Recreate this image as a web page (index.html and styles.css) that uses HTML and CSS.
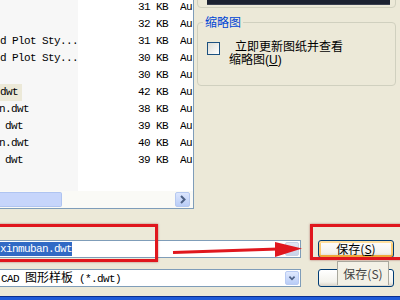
FILE: index.html
```html
<html>
<head>
	<title>save</title>
	<link rel="stylesheet" href="styles.css">
</head>
<body>
	<div class="top">
		<div class="list">
			<div class="rows">
				<div class="row"><span class="name"></span><span class="size">31 KB</span><span></span><span class="type">Au</span></div>
				<div class="row"><span class="name"></span><span class="size">32 KB</span><span></span><span class="type">Au</span></div>
				<div class="row"><span class="name">d Plot Sty...</span><span class="size">31 KB</span><span></span><span class="type">Au</span></div>
				<div class="row"><span class="name">d Plot Sty...</span><span class="size">30 KB</span><span></span><span class="type">Au</span></div>
				<div class="row"><span class="name"></span><span class="size">30 KB</span><span></span><span class="type">Au</span></div>
				<div class="row"><span class="name"><span class="hl">dwt</span></span><span class="size">42 KB</span><span></span><span class="type">Au</span></div>
				<div class="row"><span class="name cut">n.dwt</span><span class="size">38 KB</span><span></span><span class="type">Au</span></div>
				<div class="row"><span class="name pad">dwt</span><span class="size">39 KB</span><span></span><span class="type">Au</span></div>
				<div class="row"><span class="name cut">n.dwt</span><span class="size">40 KB</span><span></span><span class="type">Au</span></div>
				<div class="row"><span class="name pad">dwt</span><span class="size">39 KB</span><span></span><span class="type">Au</span></div>
			</div>
			<div class="hscroll">
				<div class="thumb"></div>
				<div class="arrow"><svg width="13" height="13" viewBox="0 0 13 13"><path d="M5 3 L8.5 6.5 L5 10" fill="none" stroke="#4D6185" stroke-width="2"/></svg></div>
			</div>
		</div>
		<div class="side">
			<div class="preview"><div class="screen"></div></div>
			<fieldset class="thumbs">
				<legend>缩略图</legend>
				<label class="opt"><span class="chk"></span><span class="ltext">立即更新图纸并查看<br>缩略图(<u>U</u>)</span></label>
			</fieldset>
		</div>
	</div>

	<div class="bottom">
		<div class="line">
			<div class="combo">
				<span class="sel">xinmuban.dwt</span>
				<span class="drop faded"><svg width="14" height="14" viewBox="0 0 14 14"><path d="M4 5.5 L7 8.5 L10 5.5" fill="none" stroke="#8FA2C8" stroke-width="2"/></svg></span>
			</div>
			<button class="btn save"><span class="cj">保存(<u>S</u>)</span></button>
		</div>
		<div class="line">
			<div class="combo">
				<span class="ftype">CAD <span class="cj">图形样板</span> (*.dwt)</span>
				<span class="drop"><svg width="14" height="14" viewBox="0 0 14 14"><path d="M4 5.5 L7 8.5 L10 5.5" fill="none" stroke="#4D6185" stroke-width="2"/></svg></span>
			</div>
			<button class="btn"></button>
		</div>
		<div class="taskbar"></div>
	</div>

	<!-- red annotations -->
	<div class="mark m1"></div>
	<div class="mark m2"></div>
	<svg class="arrowline" width="400" height="300" viewBox="0 0 400 300">
		<path d="M173 252.5 L278 249" stroke="#E0171E" stroke-width="3"/>
		<polygon points="275,242 302,248.5 275,257" fill="#E0171E"/>
	</svg>
	<div class="tip"><span class="cj">保存(S)</span></div>
</body>
</html>
```

FILE: styles.css
```css
*{
	box-sizing:border-box;
}
body{
	margin:0;
	width:400px;
	height:300px;
	overflow:hidden;
	position:relative;
	background-color:#ECE9D8;
	font-family:"Liberation Mono","Noto Sans CJK SC",monospace;
	font-size:11px;
	letter-spacing:-0.6px;
	color:#000;
}
.cj{
	font-family:"Noto Sans CJK SC",sans-serif;
	font-size:12px;
	letter-spacing:0;
}

/* file list */
.top{
	display:flex;
	height:209px;
}
.list{
	width:194px;
	flex:none;
	display:flex;
	flex-direction:column;
	background-color:#fff;
	border-right:1px solid #7F9DB9;
	border-bottom:1px solid #7F9DB9;
}
.rows{
	height:191px;
	overflow:hidden;
	background:linear-gradient(to right,#F7F7F7 78px,#fff 78px);
}
.row{
	display:grid;
	grid-template-columns:78px 90px 12px 13px;
	height:17px;
	line-height:17px;
	white-space:nowrap;
}
.row:first-child{
	margin-top:-1px;
}
.name{
	overflow:visible;
}
.name.cut{
	margin-left:-1px;
}
.name.pad{
	padding-left:5px;
}
.hl{
	display:inline-block;
	width:22px;
	background-color:#ECE9D8;
}
.size{
	text-align:right;
}
.type{
	overflow:hidden;
}
.hscroll{
	height:17px;
	display:flex;
	align-items:center;
	justify-content:space-between;
	background-color:#FAFAF6;
}
.thumb{
	width:62px;
	height:15px;
	background-color:#C6D5FB;
	border:1px solid #AFC4F1;
	border-left:none;
	border-radius:0 2px 2px 0;
}
.arrow{
	width:15px;
	height:15px;
	margin-right:3px;
	border:1px solid #B6C9F0;
	border-radius:2px;
	background:linear-gradient(#DCE6FD,#B9CDF7);
	display:flex;
	align-items:center;
	justify-content:center;
}

/* right side */
.side{
	flex:1;
	padding-left:3px;
	padding-right:4px;
}
.preview{
	margin-top:-20px;
	height:28px;
	border:1px solid #D0D0BF;
	border-radius:0 0 4px 4px;
	padding:0 5px 2px 9px;
	display:flex;
	align-items:flex-end;
}
.screen{
	width:100%;
	height:20px;
	background-color:#1C2231;
	border-bottom:1px solid #3A4050;
}
.thumbs{
	margin:7px 0 0 0;
	height:71px;
	border:1px solid #D0D0BF;
	border-radius:4px;
	padding:0 5px;
}
.thumbs legend{
	padding:0 2px;
	font-family:"Noto Sans CJK SC",sans-serif;
	font-size:12px;
	line-height:14px;
	letter-spacing:0;
	color:#0046D5;
}
.opt{
	display:flex;
	align-items:flex-start;
	margin-top:13px;
	padding-left:4px;
}
.chk{
	flex:none;
	width:13px;
	height:13px;
	margin-right:9px;
	border:1px solid #1C5180;
	background:linear-gradient(135deg,#DCDCD5,#FFFFFF);
}
.ltext{
	margin-top:-1px;
	font-family:"Liberation Sans","Noto Sans CJK SC",sans-serif;
	font-size:12px;
	line-height:13px;
	letter-spacing:0;
	text-indent:6px;
}

/* bottom */
.bottom{
	padding-top:31px;
}
.line{
	display:flex;
	align-items:center;
	height:18px;
}
.line + .line{
	margin-top:11px;
}
.combo{
	margin-left:-10px;
	width:311px;
	height:18px;
	border:1px solid #7F9DB9;
	background-color:#fff;
	display:flex;
	align-items:center;
	justify-content:space-between;
	padding-right:1px;
	white-space:nowrap;
	line-height:14px;
}
.sel{
	margin-left:9px;
	width:72px;
	height:14px;
	background-color:#316AC5;
	color:#fff;
}
.ftype{
	margin-left:10px;
}
.drop{
	width:14px;
	height:14px;
	border-radius:2px;
	border:1px solid #B9CBF3;
	background:linear-gradient(#E0E9FE,#B9CDF7);
	display:flex;
	align-items:center;
	justify-content:center;
}
.drop.faded{
	border-color:#C9D3E6;
	background:linear-gradient(#E2E7F2,#C8D3EA);
}
.btn{
	margin-left:17px;
	width:76px;
	height:18px;
	padding:0;
	border:1px solid #003C74;
	border-radius:3px;
	background:linear-gradient(#FFFFFF,#F3F2EC 75%,#D8D3C8);
	font-family:"Noto Sans CJK SC",sans-serif;
	line-height:14px;
	color:#000;
}
.btn.save{
	box-shadow:inset 0 2px 0 #FFE0A0,inset 0 -2px 0 #F0A83A,inset 2px 0 0 #FBCB73,inset -2px 0 0 #FBCB73;
}
.taskbar{
	margin-top:9px;
	height:6px;
	background-color:#1F5BD8;
	border-top:1px solid #0B2F8F;
}

/* annotations */
.mark{
	position:absolute;
	border:3px solid #E0171E;
	box-shadow:0 0 2px rgba(120,0,0,0.5);
}
.m1{
	left:-6px;
	top:224px;
	width:164px;
	height:38px;
}
.m2{
	left:310px;
	top:224px;
	width:96px;
	height:36px;
}
.arrowline{
	position:absolute;
	left:0;
	top:0;
}
.tip{
	position:absolute;
	left:337px;
	top:261px;
	width:52px;
	height:24px;
	background-color:#F3F1E6;
	border:1px solid #A9A89E;
	border-bottom:none;
	display:flex;
	align-items:center;
	justify-content:center;
	color:#444;
}
```
